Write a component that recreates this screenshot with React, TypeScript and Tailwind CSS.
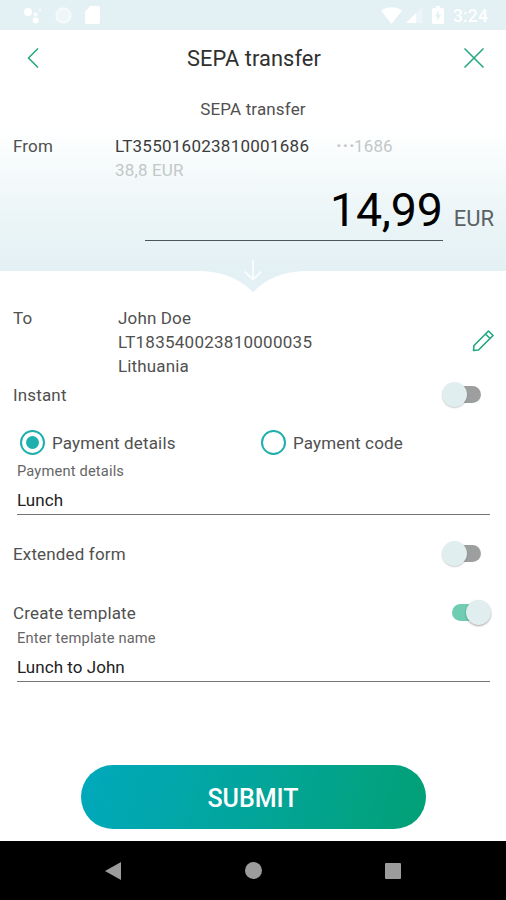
import { useState } from 'react'

type ToggleProps = {
  label: string
  checked: boolean
  onChange: () => void
}

function StatusBar() {
  return (
    <div className="flex h-[30px] shrink-0 items-center justify-between bg-[#e3f0f4] pl-6 pr-[18px] text-white">
      <div className="flex items-center gap-[13px]">
        <svg className="h-[18px] w-[18px]" viewBox="0 0 18 18" fill="currentColor">
          <circle cx="4" cy="6" r="4" />
          <circle cx="11.5" cy="8.5" r="2.2" opacity="0.8" />
          <circle cx="11.7" cy="14.6" r="3" />
          <circle cx="16" cy="4" r="1.3" opacity="0.7" />
        </svg>
        <svg className="h-[17px] w-[17px]" viewBox="0 0 17 17" fill="none" stroke="currentColor">
          <circle cx="8.5" cy="8.5" r="7" strokeWidth="2.500" opacity="0.6" />
          <circle cx="8.5" cy="8.5" r="6" fill="currentColor" stroke="none" opacity="0.4" />
        </svg>
        <svg className="h-[18px] w-[15px]" viewBox="0 0 15 18" fill="currentColor">
          <path d="M5.500 0H13a2 2 0 0 1 2 2v14a2 2 0 0 1-2 2H2a2 2 0 0 1-2-2V5.500z" />
        </svg>
      </div>
      <div className="flex items-center">
        <svg className="h-[17px] w-[21px]" viewBox="0 0 21 17" fill="currentColor">
          <path d="M0 3.500C6 -1 15 -1 21 3.500L10.500 17z" />
        </svg>
        <svg className="ml-1 h-[16px] w-[16px]" viewBox="0 0 16 16" fill="currentColor">
          <path d="M16 0v16H0z" opacity="0.35" />
          <path d="M10 6v10H0z" />
        </svg>
        <svg className="ml-[10px] h-[18px] w-[12px]" viewBox="0 0 12 18">
          <path d="M4 0h4v2h2.500A1.500 1.500 0 0 1 12 3.500v13a1.500 1.500 0 0 1-1.500 1.500h-9A1.500 1.500 0 0 1 0 16.500v-13A1.500 1.500 0 0 1 1.500 2H4z" fill="currentColor" />
          <path d="M6.800 4.500L3 10.500h2.300v4.500L9 9H6.800z" fill="#e3f0f4" />
        </svg>
        <span className="ml-[9px] pt-[3px] text-[17.5px] font-medium leading-none">3:24</span>
      </div>
    </div>
  )
}

function Toggle({ label, checked, onChange }: ToggleProps) {
  return (
    <div className="flex h-6 items-center justify-between pl-[13px] pr-[15px]">
      <span>{label}</span>
      <button
        type="button"
        role="switch"
        aria-checked={checked}
        aria-label={label}
        onClick={onChange}
        className={`flex h-[26px] w-[49px] items-center pb-px ${checked ? 'justify-end' : 'justify-start'}`}
      >
        {!checked && <span className="relative z-10 -mr-[4px] size-[25px] shrink-0 rounded-full bg-[#e0eef0] shadow-[0_1px_1.5px_rgba(0,0,0,0.2)]" />}
        <span className={`h-[17px] w-[18px] ${checked ? 'rounded-l-full bg-[#70cdb1]' : 'rounded-r-full bg-[#9d9f9f]'}`} />
        {checked && <span className="relative z-10 -ml-[4px] size-[25px] shrink-0 rounded-full bg-[#e0eef0] shadow-[0_1px_2px_rgba(0,0,0,0.35)]" />}
      </button>
    </div>
  )
}

function Radio({ label, checked, onSelect }: { label: string; checked: boolean; onSelect: () => void }) {
  return (
    <button type="button" role="radio" aria-checked={checked} onClick={onSelect} className="flex w-[241px] items-center gap-[7px]">
      <span className="flex size-[25px] items-center justify-center rounded-full border-[2.5px] border-[#1fb0ad]">
        {checked && <span className="size-[13px] rounded-full bg-[#1fb0ad]" />}
      </span>
      <span>{label}</span>
    </button>
  )
}

function Field({ label, value }: { label: string; value: string }) {
  return (
    <div className="ml-[17px] mr-4 border-b border-[#757575]">
      <div className="h-5 text-[14.7px] leading-5 tracking-[0.15px] text-[#666]">{label}</div>
      <div className="mt-[6px] h-[27px] leading-[26px] tracking-[0.05px] text-[#222]">{value}</div>
    </div>
  )
}

export default function App() {
  const [instant, setInstant] = useState(false)
  const [extended, setExtended] = useState(false)
  const [template, setTemplate] = useState(true)
  const [mode, setMode] = useState('details')

  return (
    <div className="flex h-[900px] w-[506px] flex-col overflow-hidden bg-white font-['Roboto',sans-serif] text-[17px] leading-6 tracking-[0.15px] text-[#505050]">
      <StatusBar />

      <header className="flex h-14 shrink-0 items-center justify-between pl-[27px] pr-[22px]">
        <svg className="h-5 w-5" viewBox="0 0 20 20" fill="none" stroke="#22a67f" strokeWidth="1.500">
          <path d="M11 0.500L1.500 10L11 19.500" />
        </svg>
        <h1 className="-ml-[3px] pt-[2px] text-[21.8px] tracking-[0.1px] text-[#303030]">SEPA transfer</h1>
        <svg className="h-5 w-5" viewBox="0 0 20 20" fill="none" stroke="#22a67f" strokeWidth="1.500">
          <path d="M0.500 0.500l19 19M19.500 0.500l-19 19" />
        </svg>
      </header>

      <section className="h-[185px] shrink-0 bg-linear-to-b from-white from-22% via-[#edf6f8] via-65% to-[#e3f0f4]">
        <h2 className="h-[46px] text-center leading-[46px]">SEPA transfer</h2>
        <div className="mt-[2px] flex pl-[13px]">
          <span className="w-[102px]">From</span>
          <div className="w-[221px]">
            <div className="tracking-[0.26px] text-[#3c3c3c]">LT355016023810001686</div>
            <div className="text-[#c3c7c8]">38,8 EUR</div>
          </div>
          <span className="flex h-6 items-center text-[#c3c7c8]">
            <span className="w-[18px] text-[19px] font-bold tracking-[0.8px]">···</span>
            <span>1686</span>
          </span>
        </div>
        <div className="flex items-end justify-end pr-3">
          <div className="h-[59px] w-[298px] border-b-[1.5px] border-[#4c5557] text-right text-[46.5px] leading-[56px] tracking-[-0.2px] text-black">
            14,99
          </div>
          <span className="mb-[10px] ml-[11px] text-[22px] leading-6 tracking-normal text-[#5b6163]">EUR</span>
        </div>
      </section>

      <div className="flex h-[35px] shrink-0 justify-center">
        <svg className="-mt-[12px] h-[34px] w-[100px]" viewBox="0 0 100 34">
          <path d="M0 12C21 13 37 20 50 33C63 20 79 13 100 12V11H0z" fill="#e3f0f4" />
          <path d="M50 1v19M41.500 12.500l8.500 8l8.500-8" fill="none" stroke="#f8fcfd" strokeWidth="2" />
        </svg>
      </div>

      <section className="flex h-[77px] shrink-0 pl-[13px] pr-3">
        <span className="w-[105px]">To</span>
        <div className="flex-1">
          <div>John Doe</div>
          <div className="tracking-[0.26px]">LT183540023810000035</div>
          <div>Lithuania</div>
        </div>
        <svg className="mt-[24px] h-[22px] w-[22px]" viewBox="0 0 22 22" fill="none" stroke="#22a67f" strokeWidth="1.600" strokeLinejoin="round">
          <path d="M1.500 20.500l0.500-5L16.500 1l4.500 4.500L6.500 20zM13.500 4l4.500 4.500" />
        </svg>
      </section>

      <Toggle label="Instant" checked={instant} onChange={() => setInstant(!instant)} />

      <div role="radiogroup" className="mt-[23px] flex h-[25px] items-center pl-5">
        <Radio label="Payment details" checked={mode === 'details'} onSelect={() => setMode('details')} />
        <Radio label="Payment code" checked={mode === 'code'} onSelect={() => setMode('code')} />
      </div>

      <div className="mt-[6px]">
        <Field label="Payment details" value="Lunch" />
      </div>

      <div className="mt-[27px]">
        <Toggle label="Extended form" checked={extended} onChange={() => setExtended(!extended)} />
      </div>

      <div className="mt-[35px]">
        <Toggle label="Create template" checked={template} onChange={() => setTemplate(!template)} />
        <div className="mt-[3px]">
          <Field label="Enter template name" value="Lunch to John" />
        </div>
      </div>

      <div className="mt-auto flex justify-center pb-3">
        <button
          type="button"
          className="h-16 w-[345px] rounded-full bg-linear-[105deg] from-[#00a9bc] via-[#02a59a] via-50% to-[#02a075] pt-[3px] text-[25px] font-medium tracking-normal text-white"
        >
          SUBMIT
        </button>
      </div>

      <nav className="flex h-[59px] shrink-0 items-center justify-between bg-black pl-[105px] pr-[105px]">
        <svg className="h-[18px] w-[16px]" viewBox="0 0 16 18" fill="#9c9c9c">
          <path d="M16 0v18L0 9z" />
        </svg>
        <span className="size-[17px] rounded-full bg-[#9c9c9c]" />
        <span className="size-4 rounded-[1px] bg-[#9c9c9c]" />
      </nav>
    </div>
  )
}
